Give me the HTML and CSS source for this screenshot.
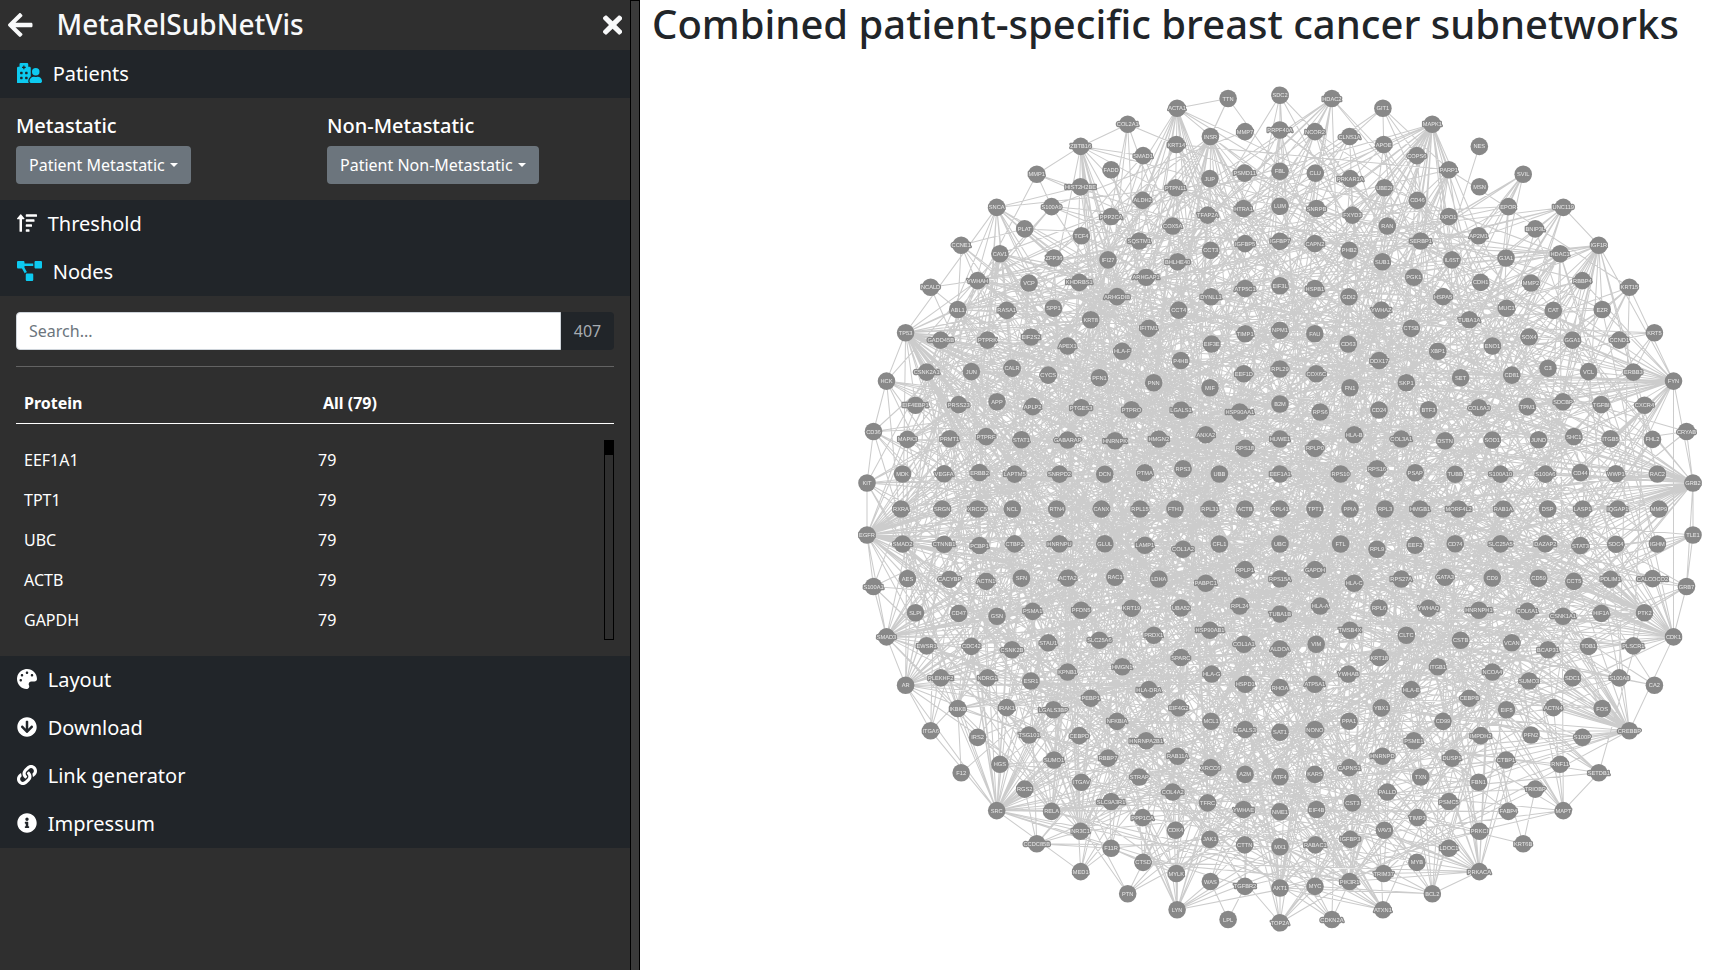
FILE: index.html
```html
<!DOCTYPE html>
<html lang="en">
<head>
<meta charset="utf-8">
<title>MetaRelSubNetVis</title>
<link rel="stylesheet" href="styles.css">
</head>
<body>
<div class="app">
  <aside class="sidebar">
    <header class="brand">
      <svg class="brand-back" viewBox="0 0 448 512"><path d="M257.5 445.1l-22.2 22.2c-9.4 9.4-24.6 9.4-33.9 0L7 273c-9.4-9.4-9.4-24.6 0-33.9L201.4 44.7c9.4-9.4 24.6-9.4 33.9 0l22.2 22.2c9.5 9.5 9.3 25-.4 34.3L136.6 216H424c13.3 0 24 10.7 24 24v32c0 13.3-10.7 24-24 24H136.6l120.5 114.8c9.8 9.3 10 24.8.4 34.3z"/></svg>
      <h1 class="brand-title">MetaRelSubNetVis</h1>
      <svg class="brand-close" viewBox="0 0 352 512"><path d="M242.72 256l100.07-100.07c12.28-12.28 12.28-32.19 0-44.48l-22.24-22.24c-12.28-12.28-32.19-12.28-44.48 0L176 189.28 75.93 89.21c-12.28-12.28-32.19-12.28-44.48 0L9.21 111.45c-12.28 12.28-12.28 32.19 0 44.48L109.28 256 9.21 356.07c-12.28 12.28-12.28 32.19 0 44.48l22.24 22.24c12.28 12.28 32.2 12.28 44.48 0L176 322.72l100.07 100.07c12.28 12.28 32.2 12.28 44.48 0l22.24-22.24c12.28-12.28 12.28-32.19 0-44.48L242.72 256z"/></svg>
    </header>

    <div class="section active">
      <svg class="wide" viewBox="0 0 640 512"><path d="M480 320a96 96 0 1 0-96-96 96 96 0 0 0 96 96zm48 32a22.88 22.88 0 0 0-7.06 1.09 124.76 124.76 0 0 1-81.89 0A22.82 22.82 0 0 0 432 352a112 112 0 0 0-112 112.62c.14 26.26 21.73 47.38 48 47.38h224c26.27 0 47.86-21.12 48-47.38A112 112 0 0 0 528 352zm-198.09 10.45A145.19 145.19 0 0 1 352 344.62V128a32 32 0 0 0-32-32h-32V32a32 32 0 0 0-32-32H96a32 32 0 0 0-32 32v64H32a32 32 0 0 0-32 32v368a16 16 0 0 0 16 16h288.31A78.62 78.62 0 0 1 288 464.79a143.06 143.06 0 0 1 41.91-102.34zM144 404a12 12 0 0 1-12 12H92a12 12 0 0 1-12-12v-40a12 12 0 0 1 12-12h40a12 12 0 0 1 12 12zm0-128a12 12 0 0 1-12 12H92a12 12 0 0 1-12-12v-40a12 12 0 0 1 12-12h40a12 12 0 0 1 12 12zm48-122a6 6 0 0 1-6 6h-20a6 6 0 0 1-6-6v-26h-26a6 6 0 0 1-6-6v-20a6 6 0 0 1 6-6h26V70a6 6 0 0 1 6-6h20a6 6 0 0 1 6 6v26h26a6 6 0 0 1 6 6v20a6 6 0 0 1-6 6h-26zm80 250a12 12 0 0 1-12 12h-40a12 12 0 0 1-12-12v-40a12 12 0 0 1 12-12h40a12 12 0 0 1 12 12zm0-128a12 12 0 0 1-12 12h-40a12 12 0 0 1-12-12v-40a12 12 0 0 1 12-12h40a12 12 0 0 1 12 12z"/></svg>
      <span>Patients</span>
    </div>
    <div class="panel patients">
      <div class="group">
        <h2>Metastatic</h2>
        <button class="dropdown">Patient Metastatic</button>
      </div>
      <div class="group">
        <h2>Non-Metastatic</h2>
        <button class="dropdown">Patient Non-Metastatic</button>
      </div>
    </div>

    <div class="section">
      <svg viewBox="0 0 512 512"><path d="M16 160h48v304a16 16 0 0 0 16 16h32a16 16 0 0 0 16-16V160h48c14.200 0 21.400-17.200 11.300-27.300l-80-96a16 16 0 0 0-22.600 0l-80 96C-5.400 142.700 1.800 160 16 160z"/><rect x="224" y="32" width="288" height="64" rx="16"/><rect x="224" y="160" width="224" height="64" rx="16"/><rect x="224" y="288" width="160" height="64" rx="16"/><rect x="224" y="416" width="96" height="64" rx="16"/></svg>
      <span>Threshold</span>
    </div>
    <div class="section active">
      <svg class="wide" viewBox="0 0 640 512"><path d="M384 320H256c-17.670 0-32 14.330-32 32v128c0 17.670 14.330 32 32 32h128c17.670 0 32-14.330 32-32V352c0-17.670-14.330-32-32-32zM192 32c0-17.670-14.330-32-32-32H32C14.330 0 0 14.330 0 32v128c0 17.670 14.330 32 32 32h95.720l73.160 128.040C211.980 300.980 232.400 288 256 288h.28L192 175.510V128h224V64H192V32zM608 0H480c-17.670 0-32 14.330-32 32v128c0 17.670 14.330 32 32 32h128c17.670 0 32-14.330 32-32V32c0-17.670-14.330-32-32-32z"/></svg>
      <span>Nodes</span>
    </div>
    <div class="panel nodes">
      <div class="search">
        <input type="text" placeholder="Search...">
        <span class="count">407</span>
      </div>
      <hr>
      <div class="row head"><span>Protein</span><span>All (79)</span></div>
      <div class="list">
        <div class="rows">
          <div class="row"><span>EEF1A1</span><span>79</span></div>
          <div class="row"><span>TPT1</span><span>79</span></div>
          <div class="row"><span>UBC</span><span>79</span></div>
          <div class="row"><span>ACTB</span><span>79</span></div>
          <div class="row"><span>GAPDH</span><span>79</span></div>
        </div>
        <div class="scrollbar"><div class="thumb"></div></div>
      </div>
    </div>

    <div class="section">
      <svg viewBox="0 0 512 512"><path d="M204.300 5C104.900 24.400 24.800 104.300 5.200 203.400c-37 187 131.700 326.400 258.800 306.700 41.200-6.400 61.400-54.600 42.500-91.700-23.100-45.400 9.900-98.400 60.900-98.400h79.700c35.800 0 64.800-29.600 64.900-65.300C511.500 97.100 368.100-26.900 204.300 5zM96 320c-17.700 0-32-14.300-32-32s14.300-32 32-32 32 14.300 32 32-14.300 32-32 32zm32-128c-17.700 0-32-14.300-32-32s14.300-32 32-32 32 14.300 32 32-14.300 32-32 32zm128-64c-17.700 0-32-14.300-32-32s14.300-32 32-32 32 14.300 32 32-14.300 32-32 32zm128 64c-17.700 0-32-14.300-32-32s14.300-32 32-32 32 14.300 32 32-14.300 32-32 32z"/></svg>
      <span>Layout</span>
    </div>
    <div class="section">
      <svg viewBox="0 0 512 512"><path d="M504 256c0 137-111 248-248 248S8 393 8 256 119 8 256 8s248 111 248 248zm-143.600-28.900L288 302.600V120c0-13.300-10.700-24-24-24h-16c-13.300 0-24 10.700-24 24v182.600l-72.400-75.500c-9.300-9.700-24.800-9.900-34.300-.4l-10.900 11c-9.400 9.400-9.400 24.600 0 33.900L239 404.300c9.400 9.400 24.600 9.400 33.900 0l132.700-132.700c9.400-9.400 9.400-24.600 0-33.900l-10.900-11c-9.500-9.500-25-9.300-34.300.4z"/></svg>
      <span>Download</span>
    </div>
    <div class="section">
      <svg viewBox="0 0 512 512"><path d="M326.612 185.391c59.747 59.809 58.927 155.698.36 214.590-.11.12-.24.25-.36.37l-67.200 67.200c-59.270 59.270-155.699 59.262-214.960 0-59.270-59.260-59.270-155.700 0-214.960l37.106-37.106c9.840-9.840 26.786-3.300 27.294 10.606.648 17.722 3.826 35.527 9.690 52.721 1.986 5.822.567 12.262-3.783 16.612l-13.087 13.087c-28.026 28.026-28.905 73.660-1.155 101.960 28.024 28.579 74.086 28.749 102.325.51l67.200-67.190c28.191-28.191 28.073-73.757 0-101.830-3.701-3.694-7.429-6.564-10.341-8.569a16.037 16.037 0 0 1-6.947-12.606c-.396-10.567 3.348-21.456 11.698-29.806l21.054-21.055c5.521-5.521 14.182-6.199 20.584-1.731a152.482 152.482 0 0 1 20.522 17.197zM467.547 44.449c-59.261-59.262-155.690-59.270-214.960 0l-67.200 67.200c-.12.12-.25.25-.36.37-58.566 58.892-59.387 154.781.36 214.590a152.454 152.454 0 0 0 20.521 17.196c6.402 4.468 15.064 3.789 20.584-1.731l21.054-21.055c8.350-8.350 12.094-19.239 11.698-29.806a16.037 16.037 0 0 0-6.947-12.606c-2.912-2.005-6.640-4.875-10.341-8.569-28.073-28.073-28.191-73.639 0-101.830l67.200-67.190c28.239-28.239 74.300-28.069 102.325.51 27.750 28.300 26.872 73.934-1.155 101.960l-13.087 13.087c-4.350 4.350-5.769 10.790-3.783 16.612 5.864 17.194 9.042 34.999 9.690 52.721.509 13.906 17.454 20.446 27.294 10.606l37.106-37.106c59.271-59.259 59.271-155.699.001-214.959z"/></svg>
      <span>Link generator</span>
    </div>
    <div class="section">
      <svg viewBox="0 0 512 512"><path d="M256 8C119.043 8 8 119.083 8 256c0 136.997 111.043 248 248 248s248-111.003 248-248C504 119.083 392.957 8 256 8zm0 110c23.196 0 42 18.804 42 42s-18.804 42-42 42-42-18.804-42-42 18.804-42 42-42zm56 254c0 6.627-5.373 12-12 12h-88c-6.627 0-12-5.373-12-12v-24c0-6.627 5.373-12 12-12h12v-64h-12c-6.627 0-12-5.373-12-12v-24c0-6.627 5.373-12 12-12h64c6.627 0 12 5.373 12 12v100h12c6.627 0 12 5.373 12 12v24z"/></svg>
      <span>Impressum</span>
    </div>
  </aside>
  <div class="resizer"></div>
  <main class="stage">
    <h1 class="stage-title">Combined patient-specific breast cancer subnetworks</h1>
    <svg class="network" viewBox="640 60 1094 910" id="network"></svg>
  </main>
</div>
<script src="network.js"></script>
</body>
</html>
```
FILE: styles.css
```css
* { box-sizing: border-box; }
body {
  margin: 0;
  height: 970px;
  overflow: hidden;
  background: #fff;
  color: #212529;
  font: 16px/1.5 "Noto Sans", "Liberation Sans", sans-serif;
}
h1, h2 { margin: 0; font-weight: 500; line-height: 1.2; }
.app { display: flex; height: 970px; }

.sidebar {
  width: 630px;
  flex: none;
  background: #2f2f2f;
  color: #fff;
}
.brand {
  display: flex;
  align-items: center;
  height: 50px;
  padding: 0 8px;
  color: #f8f9fa;
}
.brand svg { height: 28px; fill: #f8f9fa; }
.brand-back { width: 24.5px; }
.brand-close { width: 19.25px; margin-left: auto; }
.brand-title { margin-left: 24px; font-size: 28px; }

.section {
  display: flex;
  align-items: center;
  gap: 10.7px;
  height: 48px;
  padding-left: 17px;
  background: #212529;
  font-size: 20px;
}
.section svg { width: 20px; height: 20px; margin-bottom: 2px; fill: #fff; }
.section svg.wide { width: 25px; }
.section.active svg { fill: #0dcaf0; }

.patients { display: flex; height: 102px; padding: 16px 0 0 16px; }
.group { width: 311px; flex: none; }
.group h2 { font-size: 20px; margin-bottom: 8px; }
.dropdown {
  display: inline-flex;
  align-items: center;
  gap: 5px;
  height: 38px;
  padding: 0 13px;
  border: 0;
  border-radius: 4px;
  background: #6c757d;
  color: #fff;
  font: inherit;
}
.dropdown::after {
  content: "";
  border: 4.800px solid transparent;
  border-top-color: #fff;
  border-bottom: 0;
}

.nodes { height: 360px; padding: 16px 16px 0; }
.search { display: flex; height: 38px; }
.search input {
  width: 545px;
  padding: 0 12px;
  border: 1px solid #ced4da;
  border-radius: 4px 0 0 4px;
  background: #fff;
  font: inherit;
}
.search input::placeholder { color: #6c757d; opacity: 1; }
.count {
  width: 53px;
  border-radius: 0 4px 4px 0;
  background: #212529;
  color: #a7acb1;
  line-height: 38px;
  text-align: center;
}
hr { margin: 16px 0; border: 0; border-top: 1px solid #636363; }
.row { display: flex; height: 40px; padding-left: 8px; line-height: 40px; }
.row span { flex: none; width: 294px; }
.row span:last-child { width: 200px; }
.head { height: 41px; border-bottom: 1px solid #fff; font-weight: 700; }
.head span:first-child { width: 299px; }
.list { display: flex; justify-content: space-between; height: 200px; margin-top: 16px; }
.scrollbar { flex: none; width: 10px; height: 200px; border: 1px solid #000; }
.thumb { height: 14px; background: #000; }

.resizer { width: 10px; flex: none; border: 1px solid #000; border-bottom: 0; background: #3a3a3a; }

.stage { flex: 1; display: flex; flex-direction: column; }
.stage-title { height: 60px; padding-left: 12px; font-size: 40px; line-height: 48px; white-space: nowrap; }
.network { width: 1094px; height: 910px; will-change: transform; }
.edges { fill: none; stroke: #ccc; stroke-width: 1.05; }
.network circle { fill: #888; }
.network text {
  fill: #e8e8e8;
  stroke: #888;
  stroke-width: 2.6px;
  stroke-linejoin: round;
  paint-order: stroke;
  font: 5.700px "Liberation Sans", Arial, sans-serif;
  text-anchor: middle;
  text-rendering: geometricPrecision;
}
```
FILE: network.js
```js
// Concentric protein rings: [radius, names clockwise from twelve o'clock].
const rings = [
  [0, "RPL41"],
  [35, "EEF1A1 TPT1 UBC ACTB"],
  [70, "HUWE1 RPLP0 RPS10 PPIA FTL GAPDH RPS15A RPLP1 CFL1 RPL31 UBB RPS18"],
  [105, "B2M RPS6 HLA-B RPS16 RPL3 RPL9 HLA-C HLA-A TUBA1B RPL24 PABPC1 COL1A2 FTH1 RPS3 ANXA2 HSP90AA1"],
  [140, "RPL29 COX6C FN1 CD24 COL3A1 PSAP HMGB1 EEF2 RPS27A RPL6 TMSB4X VIM ALDOA COL1A1 HSP90AB1 UBA52 LDHA LAMP1 RPL15 PTMA HMGN2 LGALS1 MIF EEF1D"],
  [178.6, "NPM1 FAU CD63 DDX17 SKP1 BTF3 DSTN TUBB MORF4L2 CD74 GATA3 YWHAQ CLTC KRT18 YWHAB ATP5A1 RHOA HSPD1 HLA-G SPARC PRDX1 KRT19 RAC1 GLUL CANX DCN HNRNPK PTPRO PNN P4HB EIF3E TIMP1"],
  [223.2, "EIF3L HSPB1 GDI2 YWHAZ CTSB XBP1 SET COL6A3 SOD1 S100A10 RAB1A SLC25A5 CD9 HNRNPH1 CSTB ITGB1 HLA-E YBX1 PPA1 NONO SAT1 LGALS3 MCL1 EIF4G2 HLA-DRA HMGN1 SLC25A6 PFDN5 ACTA2 HNRNPU RTN4 SNRPD2 GABARAP PTGES3 PFN1 HLA-F IFITM1 CCT4 DYNLL1 ATP5C1"],
  [267.7, "IGFBP7 CAPN2 PHB2 SUB1 PGK1 HSPA5 TUBA1A ENO1 CD81 TPM1 JUND S100A6 DSP DAZAP2 CD59 COL6A1 VCAN NCOA4 CEBPB CD99 PSME1 HNRNPD CAPNS1 KARS ATF4 A2M XRCC6 RAB11A HNRNPA2B1 NFKBIA PEBP1 KPNB1 STAU1 PSMA1 SFN CTBP2 NCL LAPTM5 STAT1 APLP2 CYCS APEX1 KRT8 ARHGDIB ARHGAP1 BHLHE40 CCT3 IGFBP5"],
  [302.7, "LUM SNRPB FXYD3 RAN SERBP1 IL6ST CDH1 MUC1 SOX4 C3 SDCBP SHC1 CD44 LASP1 STAT3 CCT5 CSNK1A1 BCAP31 SUMO3 EIF5 IMPDH2 DUSP1 TXN PALLD CST3 EIF4B NME1 YWHAE TFRC COL4A2 STRAP RBBP7 CEBPD LGALS3BP ESR1 CSNK2B GSN ACTN1 PCBP1 XRCC5 ERBB2 PTPRF APP CALR EIF2S2 SPP1 KHDRBS1 IFI27 SQSTM1 COX5A TFAP2A HTRA1"],
  [337.8, "FBL CLU PRKAR1A UBE2I CD46 XPO1 AP2M1 GJA1 MMP2 CAT GGA1 VCL TGFBI ITGB5 WWP1 IQGAP1 SDC4 PDLIM1 HIF1A TOB1 SDC1 ACTN4 PFN2 CTBP1 FBN1 PSMC5 TIMP3 VAV3 IGFBP3 RABAC1 MX1 CTTN JAK1 CDK4 PPP1CA SLC9A3R1 ITGAV SUMO1 TSG101 IRAK1 NDRG1 CDC42 CD47 CACYBP CTNNB1 SRGN VEGFA PRMT1 PRSS23 JUN PTPRK RASA1 VCP ZFP36 TCF4 PPP2CA ALDH2 PTPN11 JUP PSMD11"],
  [379, "PRPF40A NCOR2 CLNS1A APOE COPS6 PARP1 MSN EPOR BNIP3L HDAC1 RBBP4 EZR CCND1 ERBB3 CXCR4 FHL2 RAC2 MMP9 IGHM CALCOCO2 PTK2 PLSCR1 S100A8 FOS S100P RNF11 TRIOBP FABP4 PRKCI LDOC1 MYB TRIM37 PIK3R1 MYC AKT1 TGFBR2 WAS MYLK CTSD F11R NR3C1 RELA RGS2 HGS IRS2 IKBKB PLEKHF2 EWSR1 SLPI AES SMAD2 RXRA MDK MAPK3 EIF4EBP1 CSNK2A1 GADD45B ABL1 YWHAH CAV1 PLAT S100A9 HIST2H2BE FADD SMAD1 KRT14 INSR MMP7"],
  [413.8, "SDC2 HDAC2 GIT1 MAPK1 NES SVIL UNC119 IGF1R KRT15 KRT5 FYN CRYAB GRB2 TLE1 GRB7 CDK1 CA2 CREBBP SETDB1 MAPT KRT6B PRKACA BCL2 ATXN1 CDKN2A TOP2A LPL LYN PTN MED1 CCDC85B SRC F12 ITGA6 AR SMAD3 S100A1 EGFR KIT CD36 HCK TP53 NCALD CCNE1 SNCA MMP1 ZBTB16 COL2A1 ACTA1 TTN"]
];

const degree = {
  SDC2: 4, HDAC2: 15, GIT1: 4, MAPK1: 44, NES: 1, SVIL: 9, UNC119: 14, IGF1R: 20, KRT15: 7, KRT5: 3,
  FYN: 44, CRYAB: 3, GRB2: 56, TLE1: 8, GRB7: 7, CDK1: 36, CA2: 3, CREBBP: 42, SETDB1: 8, MAPT: 12,
  KRT6B: 2, PRKACA: 26, BCL2: 12, ATXN1: 12, CDKN2A: 4, TOP2A: 9, LPL: 0, LYN: 18, PTN: 6, MED1: 6,
  CCDC85B: 5, SRC: 56, F12: 1, ITGA6: 4, AR: 34, SMAD3: 40, S100A1: 5, EGFR: 62, KIT: 14, CD36: 9,
  HCK: 11, TP53: 70, NCALD: 1, CCNE1: 4, SNCA: 18, MMP1: 3, ZBTB16: 18, COL2A1: 5, ACTA1: 20, TTN: 2,
  PTK2: 26, PIK3R1: 34, AKT1: 28, ABL1: 22, CAV1: 20, INSR: 18, NCOR2: 16, HDAC1: 22, EZR: 12, MAPK3: 18,
  CSNK2A1: 24, RELA: 22, NR3C1: 18, SMAD2: 22, PARP1: 14, MYC: 10, YWHAH: 14, IKBKB: 14,
  SHC1: 22, ESR1: 24, STAT3: 18, CTNNB1: 20, JUN: 18, PTPN11: 16, CDC42: 14, UBE2I: 14, YWHAZ: 24,
  STAT1: 16, ERBB2: 14, JAK1: 12, MSN: 3, BNIP3L: 2, TRIM37: 5, FABP4: 3, RGS2: 2, PLAT: 4, S100A9: 3,
  APOE: 6, MMP7: 4, CLNS1A: 5, SLPI: 3, MDK: 4, IGHM: 3, CALCOCO2: 3, S100A8: 4, S100P: 5
};

const fixedEdges = "TTN-ACTA1 TTN-INSR COL2A1-ZBTB16 ZBTB16-MMP1 MMP1-S100A9 CCNE1-ABL1 CCNE1-PLAT NCALD-ABL1 " +
  "NCALD-YWHAH SNCA-HIST2H2BE FYN-GRB2 GRB2-CRYAB GRB2-TLE1 GRB2-GRB7 GRB7-PTK2 GRB7-CDK1 TLE1-GRB7 FYN-CDK1 " +
  "FYN-KRT15 IGF1R-EZR IGF1R-HDAC1 IGF1R-FYN KRT5-ERBB3 KRT15-EZR UNC119-IGF1R CDK1-CREBBP CREBBP-FOS " +
  "MAPT-SETDB1 KRT6B-TRIOBP PRKACA-BCL2 MED1-F11R MED1-SRC CCDC85B-NR3C1 CCDC85B-F11R CCDC85B-RGS2 F12-IKBKB " +
  "AR-SRC AR-ITGA6 SRC-ITGA6 SRC-NR3C1 SRC-RELA SRC-HGS LPL-WAS LPL-TGFBR2 SMAD3-AR SMAD3-EGFR S100A1-SMAD3 " +
  "EGFR-S100A1 EGFR-KIT KIT-CD36 HCK-CD36 HCK-TP53 TP53-ABL1 TP53-SNCA MYC-BCL2 AKT1-BCL2 AKT1-ATXN1 MYC-CDKN2A " +
  "AKT1-TOP2A PIK3R1-TOP2A PIK3R1-CDKN2A LYN-WAS LYN-MYLK PTN-CTSD SVIL-EPOR GIT1-APOE GIT1-COPS6 HDAC2-NCOR2 " +
  "SDC2-PRPF40A SDC2-NCOR2 MAPK1-COPS6 MAPK1-PARP1 EGFR-AES KRT5-CCND1 CA2-S100A8";

const nodes = [];
const byName = {};
rings.forEach(([radius, names], ring) => {
  const list = names.split(" ");
  list.forEach((name, i) => {
    const a = i / list.length * Math.PI * 2;
    const node = { name, ring, x: 1280 + radius * Math.sin(a), y: 509 - radius * Math.cos(a) };
    node.weight = degree[name] !== undefined ? degree[name] : (node.x < 1300 ? 6.5 : 5);
    nodes.push(node);
    byName[name] = node;
  });
});

let seed = 20471;
function random() {
  seed = (seed * 1664525 + 1013904223) % 4294967296;
  return seed / 4294967296;
}
const inner = nodes.filter(n => n.ring < 11);
function pick(pool) {
  const total = pool.reduce((s, n) => s + n.weight, 0);
  let t = random() * total;
  for (const n of pool) { t -= n.weight; if (t <= 0) return n; }
  return pool[0];
}

const edges = new Map();
function connect(a, b) {
  if (a && b && a !== b) edges.set([a.name, b.name].sort().join("|"), [a, b]);
}
fixedEdges.split(" ").forEach(e => { const [a, b] = e.split("-"); connect(byName[a], byName[b]); });
nodes.filter(n => n.ring === 11).forEach(n => {
  for (let i = 0; i < n.weight * 0.85; i++) connect(n, pick(inner));
});
for (let i = 0; i < 880; i++) connect(pick(inner), pick(inner));

const path = [...edges.values()]
  .map(([a, b]) => `M${a.x.toFixed(1)} ${a.y.toFixed(1)}L${b.x.toFixed(1)} ${b.y.toFixed(1)}`).join("");
const marks = nodes.map(n => `<circle cx="${n.x.toFixed(1)}" cy="${n.y.toFixed(1)}" r="8.8"/>` +
  `<text x="${n.x.toFixed(1)}" y="${(n.y + 2).toFixed(1)}">${n.name}</text>`).join("");
document.getElementById("network").innerHTML = `<path class="edges" d="${path}"/>${marks}`;
```
